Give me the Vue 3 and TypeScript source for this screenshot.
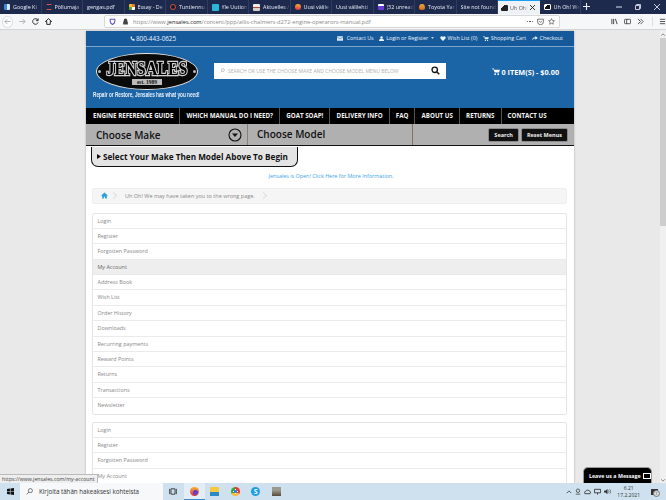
<script setup lang="ts">
interface Tab { label: string; icon: string }
const tabs: Tab[] = [
  { label: 'Google Ki', icon: 'doc' },
  { label: 'Pöllumaja', icon: 's' },
  { label: 'gengas.pdf', icon: '' },
  { label: 'Essay - De', icon: 'x' },
  { label: 'Tuntiennu', icon: 'ring' },
  { label: 'Yle Uution', icon: 'yle' },
  { label: 'Aktuelles /', icon: 'news' },
  { label: 'Uusi välile', icon: 'fox' },
  { label: 'Uusi välilehti', icon: '' },
  { label: '(32 unread', icon: 'mail' },
  { label: 'Toyota Yar', icon: 'flame' },
  { label: 'Site not found', icon: '' },
  { label: 'Uh Oh!', icon: 'car' },
  { label: 'Uh Oh! We', icon: 'car2' },
]
const nav = ['ENGINE REFERENCE GUIDE', 'WHICH MANUAL DO I NEED?', 'GOAT SOAP!', 'DELIVERY INFO', 'FAQ', 'ABOUT US', 'RETURNS', 'CONTACT US']
const menuOne = ['Login', 'Register', 'Forgotten Password', 'My Account', 'Address Book', 'Wish List', 'Order History', 'Downloads', 'Recurring payments', 'Reward Points', 'Returns', 'Transactions', 'Newsletter']
const menuTwo = ['Login', 'Register', 'Forgotten Password', 'My Account']
</script>

<template>
  <div class="screen">
    <div class="tabbar">
      <div v-for="(t, i) in tabs" :key="i" class="tab" :class="{ active: i === 12 }">
        <i v-if="t.icon" class="fav" :class="'f-' + t.icon"></i>
        <span class="tab-label">{{ t.label }}</span>
        <svg v-if="i === 12" class="tab-x" viewBox="0 0 6 6" width="5" height="5"><path d="M0 0l6 6M6 0 0 6" stroke="#222" stroke-width="1.1"/></svg>
      </div>
      <svg class="plus" viewBox="0 0 8 8" width="7" height="7"><path d="M4 0v8M0 4h8" stroke="#eef" stroke-width="1.200"/></svg>
      <div class="winctl">
        <svg viewBox="0 0 6 6" width="6" height="6"><path d="M0 3h6" stroke="#dde" stroke-width="1"/></svg>
        <svg viewBox="0 0 6 6" width="6" height="6"><path d="M.5 1.500h4v4h-4zM1.500 1.500V.5h4v4h-1" fill="none" stroke="#dde" stroke-width=".9"/></svg>
        <svg viewBox="0 0 6 6" width="6" height="6"><path d="M0 0l6 6M6 0 0 6" stroke="#dde" stroke-width=".9"/></svg>
      </div>
    </div>
    <div class="toolbar">
      <span class="backring"><svg viewBox="0 0 8 8" width="7" height="7"><path d="M7.500 4H1M4 1 1 4l3 3" fill="none" stroke="#aaa" stroke-width="1"/></svg></span>
      <svg class="t-btn" viewBox="0 0 8 8" width="7" height="7"><path d="M.5 4H7M4 1l3 3-3 3" fill="none" stroke="#aaa" stroke-width="1"/></svg>
      <svg class="t-btn" viewBox="0 0 8 8" width="7" height="7"><path d="M6.800 2.500A3.200 3.200 0 1 0 7 5M7 .5v2.500H4.500" fill="none" stroke="#222" stroke-width="1"/></svg>
      <svg class="t-btn" viewBox="0 0 8 8" width="7" height="7"><path d="M4 .7.500 4H2v3.300h4V4h1.500z" fill="none" stroke="#222" stroke-width="1.100"/></svg>
      <div class="urlbar">
        <svg viewBox="0 0 12 12" width="7" height="7"><path d="M2 2h8v4c0 3-2 4-4 5-2-1-4-2-4-5z" fill="none" stroke="#5a50c8" stroke-width="1.800"/></svg>
        <svg class="lock" viewBox="0 0 12 12" width="7" height="7"><path d="M3 6V4a3 3 0 0 1 6 0v2h1v5H2V6z" fill="#444"/></svg>
        <span class="url"><i>https://www.</i><b>jensales.com</b><i>/content/ppp/allis-chalmers-d272-engine-operarors-manual.pdf</i></span>
        <span class="dots"><i></i><i></i><i></i></span>
        <svg viewBox="0 0 12 12" width="7" height="7"><path d="M1 2h10v4.500a5 5 0 0 1-10 0zM3.500 5 6 7.500 8.500 5" fill="none" stroke="#444" stroke-width="1.200"/></svg>
        <svg viewBox="0 0 12 12" width="7" height="7"><path d="M6 1l1.500 3.300 3.500.4-2.600 2.400.7 3.600L6 8.900l-3.100 1.800.7-3.600L1 4.700l3.500-.4z" fill="none" stroke="#444" stroke-width="1.100"/></svg>
      </div>
      <div class="tool-right">
        <svg viewBox="0 0 8 8" width="7" height="7"><path d="M1 1v6M3 1v6M5 1l2 6" stroke="#444" stroke-width="1.100" fill="none"/></svg>
        <svg viewBox="0 0 8 8" width="7" height="7"><rect x=".5" y="1.500" width="7" height="5" rx="1" fill="none" stroke="#444"/><path d="M3 1.500v5" stroke="#444"/></svg>
        <svg viewBox="0 0 8 8" width="7" height="7"><path d="m1 1 3 3-3 3M4 1l3 3-3 3" stroke="#444" fill="none"/></svg>
        <span class="vsep"></span>
        <svg viewBox="0 0 8 8" width="7" height="7"><path d="M1 1.500h6M1 4h6M1 6.500h6" stroke="#444"/></svg>
      </div>
    </div>

    <div class="viewport">
      <div class="page">
        <div class="container">
          <div class="topbar">
            <span class="link phone">
              <svg viewBox="0 0 8 8" width="5" height="5"><path d="M1 1 2.500.5 3.500 2.500 2.700 3.300c.4.900 1 1.500 2 2l.8-.8 2 1L7 7.500C3.500 7.500.5 4.500 1 1z" fill="#eaf2fa"/></svg>
              800-443-0625
            </span>
            <div class="toplinks">
              <span class="link wide"><svg viewBox="0 0 8 6" width="6" height="5"><path d="M0 0h8v6H0z" fill="#dbe8f4"/><path d="m0 1 4 2.500L8 1" fill="none" stroke="#1b64a6" stroke-width=".7"/></svg>Contact Us</span>
              <span class="link"><svg viewBox="0 0 8 8" width="5" height="5"><circle cx="4" cy="2.200" r="2" fill="#eaf2fa"/><path d="M0 8c0-3 1.500-3.500 4-3.500S8 5 8 8z" fill="#eaf2fa"/></svg>Login or Register<svg class="caret" viewBox="0 0 6 3" width="3" height="2"><path d="M0 0h6L3 3z" fill="#eaf2fa"/></svg></span>
              <span class="link"><svg viewBox="0 0 8 7" width="6" height="5"><path d="M4 7 .5 3.500C-.8 1.500 2.500-1 4 1.500 5.500-1 8.800 1.500 7.500 3.500z" fill="#eaf2fa"/></svg>Wish List (0)</span>
              <span class="link"><svg viewBox="0 0 9 8" width="6" height="5"><path d="M0 .5h2l.5 1.500H9L8 5H3L1.500 1.500H0z" fill="#eaf2fa"/><circle cx="3.500" cy="7" r="1" fill="#eaf2fa"/><circle cx="7" cy="7" r="1" fill="#eaf2fa"/></svg>Shopping Cart</span>
              <span class="link"><svg viewBox="0 0 9 8" width="6" height="5"><path d="M5 0l4 3-4 3V4C3 4 1.500 4.500 0 7c0-3 2-5 5-5z" fill="#eaf2fa"/></svg>Checkout</span>
            </div>
          </div>
          <div class="header">
            <div class="brand">
              <div class="logo">
                <span class="dot left"></span>
                <span class="logo-name">JENSALES</span>
                <span class="logo-est">est. 1989</span>
                <span class="dot right"></span>
              </div>
              <div class="slogan">Repair or Restore, Jensales has what you need!</div>
            </div>
            <div class="search">
              <svg viewBox="0 0 12 12" width="5" height="5"><circle cx="7" cy="5" r="3.500" fill="none" stroke="#aaa" stroke-width="1.500"/><path d="M4 8 1 11" stroke="#aaa" stroke-width="1.500"/></svg>
              <span class="search-text">SEARCH OR USE THE CHOOSE MAKE AND CHOOSE MODEL MENU BELOW</span>
              <svg viewBox="0 0 12 12" width="9" height="9"><circle cx="5" cy="5" r="3.600" fill="none" stroke="#111" stroke-width="1.800"/><path d="m8 8 3 3" stroke="#111" stroke-width="2"/></svg>
            </div>
            <div class="cart">
              <svg viewBox="0 0 9 8" width="8" height="7"><path d="M0 .5h2l.5 1.500H9L8 5H3L1.500 1.500H0z" fill="#fff"/><circle cx="3.500" cy="7" r="1" fill="#fff"/><circle cx="7" cy="7" r="1" fill="#fff"/></svg>
              0 ITEM(S) - $0.00
            </div>
          </div>
          <div class="nav">
            <span v-for="n in nav" :key="n" class="nav-item">{{ n }}</span>
          </div>
          <div class="chooser">
            <div class="make">
              <span>Choose Make</span>
              <svg viewBox="0 0 14 14" width="14" height="14"><circle cx="7" cy="7" r="6" fill="none" stroke="#111" stroke-width="1.100"/><path d="M4 5.500h6L7 9z" fill="#111"/></svg>
            </div>
            <div class="model">
              <span class="model-label">Choose Model</span>
              <div class="btns"><span class="btn">Search</span><span class="btn">Reset Menus</span></div>
            </div>
          </div>
          <div class="begin"><svg viewBox="0 0 5 6" width="4" height="5"><path d="M0 0l5 3-5 3z" fill="#111"/></svg>Select Your Make Then Model Above To Begin</div>
          <div class="content">
            <div class="notice">Jensales is Open! Click Here for More Information.</div>
            <div class="crumb">
              <svg viewBox="0 0 12 12" width="7" height="7"><path d="M6 1 0 6.500h2V11h3V8h2v3h3V6.500h2z" fill="#2a9fe0"/></svg>
              <span class="chev"></span>
              <span class="crumb-text">Uh Oh! We may have taken you to the wrong page.</span>
              <span class="chev"></span>
            </div>
            <div class="list">
              <div v-for="m in menuOne" :key="m" class="row" :class="{ on: m === 'My Account' }">{{ m }}</div>
            </div>
            <div class="list second">
              <div v-for="m in menuTwo" :key="m" class="row">{{ m }}</div>
            </div>
          </div>
        </div>
        <div class="chat">Leave us a Message<span class="mail"></span></div>
        <div class="status">https://www.jensales.com/my-account</div>
      </div>
      <div class="scroll">
        <svg viewBox="0 0 6 4" width="4" height="3"><path d="M0 4l3-3 3 3" stroke="#555" fill="none"/></svg>
        <div class="thumb"></div>
        <svg class="down" viewBox="0 0 6 4" width="4" height="3"><path d="M0 0l3 3 3-3" stroke="#555" fill="none"/></svg>
      </div>
    </div>

    <div class="taskbar">
      <svg class="win" viewBox="0 0 12 12" width="7" height="7"><path d="M0 1.700l5-.7v4.500H0zM6 .9l6-.9v5.500H6zM0 6.500h5V11l-5-.7zM6 6.500h6V12l-6-.9z" fill="#111"/></svg>
      <div class="tsearch">
        <svg viewBox="0 0 12 12" width="7" height="7"><circle cx="7.500" cy="4.500" r="3.500" fill="none" stroke="#333" stroke-width="1.100"/><path d="M5 7 1 11" stroke="#333" stroke-width="1.100"/></svg>
        <span>Kirjoita tähän hakeaksesi kohteista</span>
      </div>
      <svg class="tv" viewBox="0 0 12 10" width="8" height="7"><path d="M3 1h6v8H3zM1 1v8M11 1v8" fill="none" stroke="#222" stroke-width="1.200"/></svg>
      <div class="tapp active"><i class="ff"></i></div>
      <div class="tapp"><i class="folder"></i></div>
      <div class="tapp"><i class="chrome"></i></div>
      <div class="tapp"><i class="skype">S</i></div>
      <div class="tapp"><i class="photo"></i></div>
      <div class="tray">
        <svg viewBox="0 0 8 8" width="6" height="6"><path d="m1 5.500 3-3 3 3" fill="none" stroke="#333" stroke-width="1"/></svg>
        <svg viewBox="0 0 8 8" width="6" height="7"><circle cx="4" cy="3" r="2.300" fill="none" stroke="#333"/><path d="M1 7.500h6" stroke="#333"/></svg>
        <svg viewBox="0 0 8 8" width="7" height="7"><path d="M1 6.500C0 5 1 3.500 2.500 3.500 3 2 5.500 2 6 3.500c1.500 0 2 2 1 3z" fill="none" stroke="#333"/></svg>
        <svg viewBox="0 0 8 8" width="7" height="7"><path d="M.5 1.500h7v4h-7zM4 5.500v2" fill="none" stroke="#333"/></svg>
        <svg viewBox="0 0 8 8" width="7" height="7"><path d="M0 3h1.500L4 1v6L1.500 5H0z" fill="#333"/><path d="M5 2.500c1 1 1 2 0 3M6.500 1.500c1.500 1.500 1.500 3.500 0 5" fill="none" stroke="#333" stroke-width=".7"/></svg>
        <div class="clock"><div>6.21</div><div>17.2.2021</div></div>
        <span class="note"><b>1</b></span>
      </div>
    </div>
  </div>
</template>

<style scoped>
.screen { width: 666px; height: 500px; overflow: hidden; display: flex; flex-direction: column; font-family: "Open Sans", "Noto Sans", sans-serif; background: #fff; }
.tabbar { height: 14px; background: #1d2a4d; display: flex; align-items: stretch; color: #e8ecf4; font-size: 5.400px; position: relative; }
.tab { width: 41.500px; flex: none; display: flex; align-items: center; gap: 3px; padding-left: 4px; box-sizing: border-box; border-right: 1px solid #2f3c63; overflow: hidden; white-space: nowrap; }
.tab.active { background: #eef1f5; color: #555; border-top: 1px solid #1a9cf0; border-right: none; gap: 2px; padding-left: 3px; }
.tab-label { overflow: hidden; flex: 1; min-width: 0; -webkit-mask-image: linear-gradient(90deg, #000 75%, transparent); mask-image: linear-gradient(90deg, #000 75%, transparent); }
.tab-x { margin-right: 5px; flex: none; }
.fav { width: 6px; height: 6px; flex: none; display: block; border-radius: 1px; }
.f-doc { background: linear-gradient(90deg, #3f87d8 50%, #dbe6f2 50%); }
.f-s { background: none; border: 1.500px solid #e0503c; box-sizing: border-box; border-left-color: transparent; border-right-color: transparent; }
.f-x { background: conic-gradient(#e8792b 0 25%, #fff 25% 50%, #5aa53a 50% 75%, #e8c02b 75%); }
.f-ring { background: #111a3a; border: 1.500px solid #e0502c; border-radius: 50%; box-sizing: border-box; }
.f-yle { background: #2bb6d8; width: 7px; height: 7px; }
.f-news { background: linear-gradient(#f0ece8 40%, #b04a3a 40% 60%, #d8cfc8 60%); width: 7px; height: 7px; }
.f-fox { background: linear-gradient(#ffb02e, #d8304c); border-radius: 50%; }
.f-mail { background: #6a3bd8; border-top: 2px solid #fff; box-sizing: border-box; }
.f-flame { background: linear-gradient(#f2a63c, #d4691c); border-radius: 50% 50% 50% 50% / 70% 70% 40% 40%; }
.f-car { background: linear-gradient(135deg, #eee 30%, #222 30%); width: 7px; }
.f-car2 { background: linear-gradient(135deg, #fff 30%, #111 30%); width: 7px; border: 1px solid #fff; box-sizing: border-box; }
.plus { position: absolute; left: 583px; top: 3px; }
.winctl { position: absolute; right: 6px; top: 4px; display: flex; gap: 13px; }
.toolbar { height: 16px; background: #f6f7f8; border-bottom: 1px solid #d4d4d4; display: flex; align-items: center; position: relative; box-sizing: border-box; padding-left: 2px; }
.backring { width: 12px; height: 12px; border: 1px solid #ddd; border-radius: 50%; box-sizing: border-box; display: flex; align-items: center; justify-content: center; background: #fff; }
.t-btn { margin-left: 6px; flex: none; }
.t-btn + .urlbar { margin-left: 52px; }
.urlbar { width: 456px; height: 13px; background: #fff; border: 1px solid #d8d8da; border-radius: 2px; display: flex; align-items: center; gap: 4px; padding: 0 4px; box-sizing: border-box; flex: none; }
.lock { margin-left: 2px; }
.url { font-size: 5.700px; flex: 1; white-space: nowrap; overflow: hidden; letter-spacing: .01px; }
.url i { font-style: normal; color: #8a8a8a; }
.url b { font-weight: 400; color: #222; }
.dots { display: flex; gap: 1px; }
.dots i { width: 1.500px; height: 1.500px; background: #444; border-radius: 50%; }
.tool-right { display: flex; align-items: center; gap: 6px; margin-left: 51px; }
.vsep { width: 1px; height: 9px; background: #ddd; margin: 0 0 0 2px; }
.viewport { height: 453px; display: flex; position: relative; background: #e9e9e9; }
.page { flex: 1; position: relative; overflow: hidden; background: #e9e9e9; padding: 1px 0 0 86px; }
.container { width: 488px; background: #fff; box-shadow: 0 0 2px #aaa; }
.topbar { height: 15.500px; background: #15599a; border-bottom: 1px solid #7ea6cc; display: flex; justify-content: space-between; align-items: center; color: #eaf2fa; font-size: 5.350px; box-sizing: border-box; padding: 0 11px 0 44px; }
.toplinks { display: flex; gap: 5.500px; }
.link { display: inline-flex; align-items: center; gap: 2px; white-space: nowrap; }
.link.wide { gap: 4px; }
.caret { margin-left: 1px; }
.phone { font-size: 6.300px; gap: 1px; }
.header { height: 61px; background: #1b64a6; display: flex; position: relative; }
.brand { width: 128px; padding: 6px 0 0 7px; box-sizing: border-box; flex: none; }
.logo { position: relative; width: 102px; height: 37px; background: #0a0a0a; border-radius: 50%; border: 1px solid #e4e4e4; display: flex; flex-direction: column; align-items: center; margin-left: 3px; box-sizing: border-box; }
.logo-name { font-family: "Liberation Serif", serif; font-weight: 700; font-size: 16px; line-height: 14px; color: #000; margin-top: 8px; transform: scaleY(1.150); -webkit-text-stroke: 2px #d4d4d4; paint-order: stroke fill; }
.logo-est { font-family: "Liberation Serif", serif; font-weight: 700; background: #bcbcbc; color: #111; font-size: 5.500px; line-height: 6px; width: 30px; text-align: center; margin-top: 3px; }
.dot { position: absolute; top: 16px; width: 3px; height: 3px; border-radius: 50%; background: #bbb; }
.dot.left { left: 1px; } .dot.right { right: 1px; }
.slogan { font-family: "Liberation Sans", sans-serif; font-size: 7px; font-weight: 700; line-height: 8px; color: #e8f0fa; white-space: nowrap; margin-top: 1px; transform: scaleX(.67); transform-origin: left; }
.search { margin-top: 16px; width: 232px; height: 16px; background: #fff; display: flex; align-items: center; padding: 0 6px 0 6px; box-sizing: border-box; flex: none; gap: 3px; }
.search-text { flex: 1; font-size: 5px; color: #b0b0b0; white-space: nowrap; overflow: hidden; }
.cart { margin: 20px 0 0 46px; height: 10px; color: #fff; font-weight: 700; font-size: 7.300px; line-height: 10px; white-space: nowrap; display: flex; align-items: center; gap: 1.500px; }
.nav { height: 16.500px; background: #000; display: flex; align-items: center; color: #f4f4f4; font-weight: 700; font-size: 6.200px; }
.nav-item { height: 16.500px; line-height: 16.500px; padding: 0 6.100px; border-right: 1px solid #555; white-space: nowrap; box-sizing: border-box; }
.nav-item:first-child { padding-left: 7px; }
.nav-item:last-child { border: none; }
.chooser { height: 21px; background: #b0b0b0; display: flex; border-bottom: 1.500px solid #111; box-sizing: content-box; }
.make { width: 162px; padding: 0 5px 0 10px; display: flex; align-items: center; justify-content: space-between; box-sizing: border-box; border-right: 1px solid #8a8078; font-weight: 600; font-size: 10px; color: #111; }
.model { flex: 1; display: flex; justify-content: space-between; align-items: center; font-weight: 600; font-size: 10px; color: #111; padding: 0 6px 0 9px; }
.model-label { width: 155px; border-right: 1px solid #8a7060; line-height: 21px; flex: none; }
.btns { display: flex; gap: 2px; }
.btn { background: #111; color: #f0f0f0; font-size: 5.500px; font-weight: 700; padding: 0 5px; height: 12px; line-height: 12px; border: 1px solid #8a8a8a; border-radius: 2px; }
.begin { width: 207px; height: 20px; margin: .5px 0 0 5px; box-sizing: border-box; border: 1px solid #111; border-top: none; border-radius: 0 0 7px 7px; background: #e4e4e4; font-weight: 700; font-size: 8.200px; color: #111; display: flex; align-items: center; gap: 2px; padding-left: 5px; white-space: nowrap; }
.content { padding: 0 7px 0 6px; }
.notice { text-align: center; color: #3aa6e6; font-size: 5.400px; margin-top: 4.500px; height: 11px; line-height: 11px; padding-left: 3px; }
.crumb { margin-top: 5.500px; height: 16px; background: #f5f5f5; border: 1px solid #eee; border-radius: 2px; display: flex; align-items: center; padding-left: 8px; font-size: 5.500px; color: #888; box-sizing: border-box; }
.crumb-text { margin: 0 3px 0 9px; }
.chev { width: 4px; height: 4px; border-top: 1px solid #ddd; border-right: 1px solid #ddd; transform: rotate(45deg); margin-left: 3px; }
.list { margin-top: 9px; border: 1px solid #e5e5e5; border-radius: 2px; }
.list.second { margin-top: 7px; }
.row { height: 15.400px; line-height: 15.400px; border-bottom: 1px solid #eaeaea; padding-left: 4.500px; font-size: 5.400px; color: #888; box-sizing: border-box; }
.row:last-child { border-bottom: none; }
.row.on { background: #eee; color: #666; }
.chat { position: absolute; right: 7px; top: 437px; width: 69px; height: 16px; box-sizing: border-box; background: #000; color: #fff; border: 1px solid #999; border-bottom: none; border-radius: 5px 5px 0 0; font-size: 5.300px; font-weight: 700; padding-left: 5px; display: flex; align-items: center; gap: 2px; white-space: nowrap; }
.mail { display: inline-block; width: 7px; height: 4px; border: 1px solid #fff; }
.status { position: absolute; left: 0; bottom: 0; height: 8px; line-height: 8px; background: #eee; border: 1px solid #bbb; border-left: none; border-bottom: none; font-size: 5.200px; color: #444; padding: 0 2px; white-space: nowrap; }
.scroll { width: 6px; background: #f0f0f0; display: flex; flex-direction: column; align-items: center; gap: 2px; padding-top: 3px; box-sizing: border-box; margin-left: 1px; }
.thumb { width: 6px; height: 188px; flex: none; background: #cdcdcd; }
.down { margin-top: auto; margin-bottom: 1px; }
.taskbar { height: 17px; background: #cfe1ee; display: flex; align-items: center; position: relative; }
.win { margin-left: 7px; flex: none; }
.tsearch { margin-left: 6px; width: 143px; height: 17px; background: #f6f8fa; font-size: 6.200px; color: #333; display: flex; align-items: center; gap: 6px; padding-left: 6px; box-sizing: border-box; white-space: nowrap; flex: none; }
.tv { margin-left: 6px; flex: none; }
.tapp { width: 20.500px; height: 17px; display: flex; justify-content: center; align-items: center; flex: none; }
.tapp.active { background: #e2edf5; border-bottom: 1px solid #3a8ad0; box-sizing: border-box; margin-left: 7px; }
.tapp i { width: 9px; height: 9px; display: block; }
.ff { background: radial-gradient(circle at 60% 60%, #6a3fc8 0 30%, transparent 32%), linear-gradient(#ffb02e, #d8304c); border-radius: 50%; }
.folder { background: linear-gradient(#f5c842 60%, #2a8ac8 60%); }
.chrome { border-radius: 50%; background: radial-gradient(circle, #3a7fe0 0 25%, #fff 26% 33%, transparent 34%), conic-gradient(#e33 0 33%, #fb3 33% 66%, #3a3 66%); }
.skype { border-radius: 50%; background: #1ba0e2; color: #fff; font-style: normal; font-size: 7px; line-height: 9px; text-align: center; font-weight: 700; }
.photo { background: linear-gradient(#9a9a90 35%, #5a4a3a); }
.tray { margin-left: auto; height: 17px; display: flex; align-items: center; gap: 3px; padding-right: 8px; color: #333; }
.clock { text-align: center; font-size: 5px; line-height: 6.500px; margin: 0 8px 0 3px; white-space: nowrap; }
.note { width: 7px; height: 6px; background: #333; position: relative; }
.note b { position: absolute; right: -2px; bottom: -2px; width: 5px; height: 5px; line-height: 5px; text-align: center; font-size: 4px; font-weight: 400; border-radius: 50%; background: #ddd; border: .5px solid #777; color: #222; }
</style>

<style>
html, body { margin: 0; overflow: hidden; }
</style>
